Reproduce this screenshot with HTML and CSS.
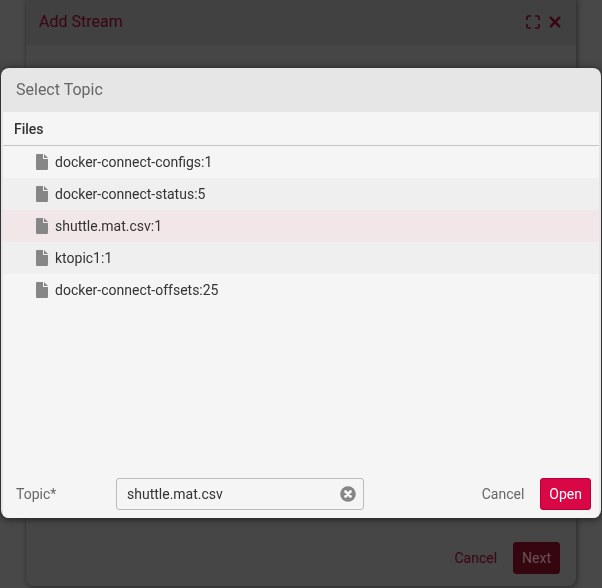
FILE: index.html
```html
<!DOCTYPE html>
<html lang="en">
<head>
<meta charset="utf-8">
<meta name="viewport" content="width=device-width, initial-scale=1">
<title>Select Topic</title>
<link rel="stylesheet" href="styles.css">
</head>
<body>
<section class="wizard" aria-labelledby="wizard-title">
  <header class="wizard-header">
    <h1 class="title" id="wizard-title">Add Stream</h1>
    <button class="icon-button" type="button" aria-label="Maximize">
      <svg width="14" height="14" viewBox="0 0 14 14" fill="none" stroke="currentColor" stroke-width="1.7"><path d="M1 5V2l1-1h3M9 1h3l1 1v3M13 9v3l-1 1H9M5 13H2l-1-1V9"/></svg>
    </button>
    <button class="icon-button" type="button" aria-label="Close">
      <svg width="12" height="12" viewBox="0 0 12 12" fill="none" stroke="currentColor" stroke-width="2.4" stroke-linecap="round"><path d="M1.700 1.700l8.600 8.600M10.300 1.700l-8.600 8.600"/></svg>
    </button>
  </header>
  <div class="wizard-body"></div>
  <footer class="actions wizard-actions">
    <button class="button" type="button">Cancel</button>
    <button class="button button-primary" type="button">Next</button>
  </footer>
</section>

<div class="overlay">
  <form class="dialog" role="dialog" aria-labelledby="dialog-title">
    <header class="dialog-header"><h2 class="title" id="dialog-title">Select Topic</h2></header>
    <div class="dialog-body">
      <h3 class="list-heading">Files</h3>
      <ul class="files">
        <li class="file"><svg class="file-icon" viewBox="0 0 12 16"><path d="M1 0h6v5h5v10a1 1 0 0 1-1 1H1a1 1 0 0 1-1-1V1a1 1 0 0 1 1-1zM8 0l4 4H8z"/></svg>docker-connect-configs:1</li>
        <li class="file"><svg class="file-icon" viewBox="0 0 12 16"><path d="M1 0h6v5h5v10a1 1 0 0 1-1 1H1a1 1 0 0 1-1-1V1a1 1 0 0 1 1-1zM8 0l4 4H8z"/></svg>docker-connect-status:5</li>
        <li class="file file-selected"><svg class="file-icon" viewBox="0 0 12 16"><path d="M1 0h6v5h5v10a1 1 0 0 1-1 1H1a1 1 0 0 1-1-1V1a1 1 0 0 1 1-1zM8 0l4 4H8z"/></svg>shuttle.mat.csv:1</li>
        <li class="file"><svg class="file-icon" viewBox="0 0 12 16"><path d="M1 0h6v5h5v10a1 1 0 0 1-1 1H1a1 1 0 0 1-1-1V1a1 1 0 0 1 1-1zM8 0l4 4H8z"/></svg>ktopic1:1</li>
        <li class="file"><svg class="file-icon" viewBox="0 0 12 16"><path d="M1 0h6v5h5v10a1 1 0 0 1-1 1H1a1 1 0 0 1-1-1V1a1 1 0 0 1 1-1zM8 0l4 4H8z"/></svg>docker-connect-offsets:25</li>
      </ul>
      <footer class="dialog-footer">
        <label class="field-label" for="topic">Topic*</label>
        <div class="field">
          <input class="field-input" id="topic" type="text" value="shuttle.mat.csv">
          <button class="clear" type="button" aria-label="Clear">
            <svg width="16" height="16" viewBox="0 0 16 16"><circle cx="8" cy="8" r="7.800" fill="#868686"/><path d="M5.500 5.500l5 5M10.500 5.500l-5 5" stroke="#f5f5f5" stroke-width="2.800" stroke-linecap="round"/></svg>
          </button>
        </div>
        <div class="actions">
          <button class="button" type="button">Cancel</button>
          <button class="button button-primary" type="submit">Open</button>
        </div>
      </footer>
    </div>
  </form>
</div>
</body>
</html>
```
FILE: styles.css
```css
* {
  box-sizing: border-box;
}

body {
  margin: 0;
  min-height: 100vh;
  padding: 0 26px 2px;
  display: flex;
  flex-direction: column;
  background: #484848;
  color: #333;
  font: 14px/20px Roboto, sans-serif;
}

button,
input {
  font: inherit;
}

.title {
  margin: 0;
  font-size: 16px;
  line-height: 20px;
  font-weight: 400;
}

/* Wizard behind the dialog, shown dimmed */
.wizard {
  flex: 1;
  display: flex;
  flex-direction: column;
  border-radius: 0 0 8px 8px;
  background: #464646;
  box-shadow: 1px 1px 4px 1px #303030;
  color: #3b0512;
}

.wizard-header {
  display: flex;
  align-items: center;
  gap: 9px;
  height: 45px;
  padding: 0 15px 2px 13px;
  background: #414141;
}

.wizard-header .title {
  flex: 1;
}

.wizard-body {
  flex: 1;
}

.icon-button,
.clear {
  display: flex;
  padding: 0;
  border: 0;
  background: none;
  color: inherit;
}

.actions {
  display: flex;
  justify-content: flex-end;
  gap: 7px;
}

.wizard-actions {
  padding: 12px 16px;
}

.button {
  height: 32px;
  padding: 0 8px;
  border: 1px solid transparent;
  border-radius: 3px;
  background: none;
  color: inherit;
}

.wizard .button-primary {
  border-color: #310611;
  background: #35060f;
  color: #6a5055;
}

/* Topic dialog */
.overlay {
  position: fixed;
  inset: 0;
  padding: 68px 1px;
}

.dialog {
  overflow: hidden;
  border-radius: 8px;
  background: #e6e6e6;
  box-shadow: 0 1px 6px 1px #252525;
}

.dialog-header {
  padding: 12px 15px;
  color: #666;
}

.dialog-body {
  margin: 0 2px;
  background: #f5f5f5;
}

.list-heading {
  margin: 0;
  padding: 7px 11px 6px;
  border-bottom: 1px solid #c5c5c5;
  font-size: 14px;
  line-height: 20px;
  font-weight: 500;
}

.files {
  min-height: 324px;
  margin: 0;
  padding: 0;
  list-style: none;
}

.file {
  display: flex;
  align-items: center;
  gap: 7px;
  height: 32px;
  padding: 0 33px;
}

.file:nth-child(even) {
  background: #efefef;
}

.file-selected {
  background: #f1e6e8;
}

.file-icon {
  width: 12px;
  height: 16px;
  fill: #868686;
}

.dialog-footer {
  display: grid;
  grid-template-columns: 100px minmax(120px, 248px) 1fr;
  align-items: center;
  padding: 8px 8px 8px 13px;
  color: #666;
}

.field {
  display: flex;
  align-items: center;
  height: 32px;
  padding: 0 7px 0 10px;
  border: 1px solid #bbb;
  border-radius: 3px;
}

.field-input {
  flex: 1;
  min-width: 0;
  padding: 0;
  border: 0;
  outline: 0;
  background: none;
  color: #333;
}

.dialog .button-primary {
  border-color: #b50038;
  background: #d90746;
  color: #fff;
}
```
